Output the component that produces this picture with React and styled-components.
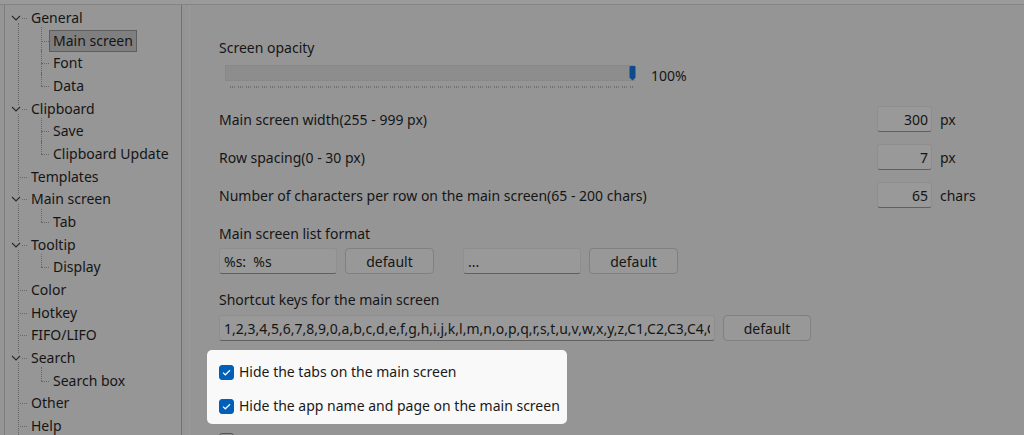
import React from 'react';
import styled, { createGlobalStyle } from 'styled-components';

// The screenshot is a dimmed settings window with one lit group, so the
// colours below are the dimmed ones and only the Spotlight keeps full light.

const GlobalStyle = createGlobalStyle`
  html, body {
    margin: 0;
    padding: 0;
    width: 1024px;
    height: 435px;
    overflow: hidden;
    background: #9a9a9a;
  }

  body {
    font-family: 'Noto Sans', 'Open Sans', 'DejaVu Sans', sans-serif;
    font-size: 14px;
    color: #151515;
  }
`;

const Window = styled.div`
  display: flex;
  height: 431px;
  margin-top: 4px;
  border-top: 1px solid #848484;
  background: #959595;
`;

const TreePanel = styled.nav`
  flex: none;
  width: 176px;
  margin-left: 4px;
  border-left: 1px solid #7d7d7d;
  border-right: 1px solid #727272;
  background-color: #969696;
`;

const TreeList = styled.ul`
  position: relative;
  list-style: none;
  margin: 0;
  padding: 1.7px 0 0;

  &::before {
    content: '';
    position: absolute;
    left: 13px;
    top: 18px;
    bottom: 0;
    border-left: 1px dotted #666666;
  }
`;

const TreeRow = styled.li`
  position: relative;
  display: flex;
  align-items: center;
  height: 22.67px;
  padding-left: ${(p) => (p.$level === 0 ? 22 : 44)}px;
  white-space: nowrap;

  &::after {
    content: '';
    position: absolute;
    top: 50%;
    left: ${(p) => (p.$level === 0 ? 15 : 36)}px;
    width: ${(p) => (p.$level === 0 ? 7 : 8)}px;
    border-top: 1px dotted #666666;
  }

  &::before {
    content: '';
    display: ${(p) => (p.$level === 0 ? 'none' : 'block')};
    position: absolute;
    left: 36px;
    top: -2px;
    height: ${(p) => (p.$last ? 'calc(50% + 2px)' : 'calc(100% + 2px)')};
    border-left: 1px dotted #666666;
  }
`;

const Chevron = styled.svg`
  position: absolute;
  left: 5px;
  top: 50%;
  margin-top: -4px;
  width: 12px;
  height: 8px;
  background: #969696;
  z-index: 1;
`;

const TreeLabel = styled.span`
  position: relative;
  z-index: 1;
  line-height: 20px;
  padding: 0 3px;
  border: 1px solid ${(p) => (p.$selected ? '#5e5e5e' : 'transparent')};
  background: ${(p) => (p.$selected ? '#7f7f7f' : 'transparent')};
`;

const SettingsPanel = styled.div`
  flex: 1;
  margin-left: 7px;
  border-left: 1px solid #9b9b9b;
  padding: 33px 0 0 29px;
`;

const SectionLabel = styled.div`
  line-height: 20px;
  margin-top: ${(p) => p.$top || 0}px;
`;

const SliderRow = styled.div`
  display: flex;
  align-items: flex-start;
  margin-top: 7px;
`;

const SliderBox = styled.div`
  width: 410px;
  margin-left: 6px;
`;

const Track = styled.div`
  position: relative;
  height: 14px;
  border: 1px solid #888888;
  background: #8d8d8d;
`;

const Thumb = styled.svg`
  position: absolute;
  right: -2px;
  top: 0;
  width: 7px;
  height: 15px;
`;

const Ticks = styled.div`
  height: 2px;
  margin: 5px 1px 0 5px;
  background: repeating-linear-gradient(
    90deg,
    #707070 0 1px,
    transparent 1px 2px,
    #707070 2px 3px,
    transparent 3px 4px,
    #777777 4px 5px,
    transparent 5px 8px
  );
`;

const SliderValue = styled.span`
  margin-left: 16px;
  line-height: 20px;
  margin-top: 1px;
`;

const NumberRow = styled.div`
  display: grid;
  grid-template-columns: 650px 55px auto;
  column-gap: 8px;
  align-items: center;
  height: 26px;
  margin-top: ${(p) => p.$top}px;
`;

const TextField = styled.input`
  box-sizing: border-box;
  width: ${(p) => p.$width}px;
  height: 26px;
  margin: 0;
  padding: 0 ${(p) => (p.$right ? 3 : 4)}px;
  border: 1px solid #8e8e8e;
  border-bottom: 1px solid #606060;
  border-radius: 3px;
  background: #999999;
  font-family: inherit;
  font-size: 14px;
  color: #151515;
  text-align: ${(p) => (p.$right ? 'right' : 'left')};
  outline: none;
`;

const FieldRow = styled.div`
  display: flex;
  align-items: center;
  gap: 8px;
  margin-top: ${(p) => p.$top}px;
`;

const Spacer = styled.div`
  width: ${(p) => p.$width}px;
`;

const Button = styled.button`
  box-sizing: border-box;
  width: ${(p) => p.$width}px;
  height: 26px;
  padding: 0;
  border: 1px solid #808080;
  border-radius: 4px;
  background: #989898;
  font-family: inherit;
  font-size: 14px;
  color: #151515;
`;

const Spotlight = styled.div`
  box-sizing: border-box;
  width: 360px;
  margin: 9px 0 0 -12px;
  padding: 12px 0 8px 12px;
  border-radius: 5px;
  background: #f9f9f9;
  color: #1a1a1a;
  display: flex;
  flex-direction: column;
  gap: 14px;
`;

const CheckRow = styled.label`
  display: flex;
  align-items: center;
  gap: 5px;
  height: 20px;
  line-height: 20px;
  white-space: nowrap;
  margin-top: ${(p) => p.$top || 0}px;
`;

const CheckBox = styled.span`
  box-sizing: border-box;
  flex: none;
  display: flex;
  align-items: center;
  justify-content: center;
  width: 15px;
  height: 15px;
  border-radius: 3px;
  border: 1px solid ${(p) => (p.$checked ? '#005fb8' : '#555555')};
  background: ${(p) => (p.$checked ? '#005fb8' : '#939393')};
`;

const tree = [
  { label: 'General', level: 0, open: true },
  { label: 'Main screen', level: 1, selected: true },
  { label: 'Font', level: 1 },
  { label: 'Data', level: 1, last: true },
  { label: 'Clipboard', level: 0, open: true },
  { label: 'Save', level: 1 },
  { label: 'Clipboard Update', level: 1, last: true },
  { label: 'Templates', level: 0 },
  { label: 'Main screen', level: 0, open: true },
  { label: 'Tab', level: 1, last: true },
  { label: 'Tooltip', level: 0, open: true },
  { label: 'Display', level: 1, last: true },
  { label: 'Color', level: 0 },
  { label: 'Hotkey', level: 0 },
  { label: 'FIFO/LIFO', level: 0 },
  { label: 'Search', level: 0, open: true },
  { label: 'Search box', level: 1, last: true },
  { label: 'Other', level: 0 },
  { label: 'Help', level: 0 },
];

const numberRows = [
  { label: 'Main screen width(255 - 999 px)', value: '300', unit: 'px', top: 18 },
  { label: 'Row spacing(0 - 30 px)', value: '7', unit: 'px', top: 12 },
  { label: 'Number of characters per row on the main screen(65 - 200 chars)', value: '65', unit: 'chars', top: 12 },
];

const shortcutKeys =
  '1,2,3,4,5,6,7,8,9,0,a,b,c,d,e,f,g,h,i,j,k,l,m,n,o,p,q,r,s,t,u,v,w,x,y,z,C1,C2,C3,C4,C5,C6,C7,C8,C9';

const Check = ({ checked }) => (
  <CheckBox $checked={checked}>
    {checked && (
      <svg width="9" height="7" viewBox="0 0 9 7">
        <path d="M1 3.6 L3.3 5.8 L8 1.2" fill="none" stroke="#ffffff" strokeWidth="1.2" />
      </svg>
    )}
  </CheckBox>
);

const App = () => {
  return (
    <>
      <GlobalStyle />
      <Window>
        <TreePanel>
          <TreeList>
            {tree.map((item, i) => (
              <TreeRow key={i} $level={item.level} $last={item.last}>
                {item.open && (
                  <Chevron viewBox="0 0 12 8">
                    <path d="M2 2 L6 6 L10 2" fill="none" stroke="#2a2a2a" strokeWidth="1.1" />
                  </Chevron>
                )}
                <TreeLabel $selected={item.selected}>{item.label}</TreeLabel>
              </TreeRow>
            ))}
          </TreeList>
        </TreePanel>

        <SettingsPanel>
          <SectionLabel>Screen opacity</SectionLabel>
          <SliderRow>
            <SliderBox>
              <Track>
                <Thumb viewBox="0 0 7 15">
                  <path d="M0.5 1 Q0.5 0 1.5 0 L5.5 0 Q6.5 0 6.5 1 L6.5 11.5 L3.5 14.5 L0.5 11.5 Z" fill="#0f4a8e" />
                </Thumb>
              </Track>
              <Ticks />
            </SliderBox>
            <SliderValue>100%</SliderValue>
          </SliderRow>

          {numberRows.map((row) => (
            <NumberRow key={row.label} $top={row.top}>
              <span>{row.label}</span>
              <TextField $width={55} $right readOnly value={row.value} />
              <span>{row.unit}</span>
            </NumberRow>
          ))}

          <SectionLabel $top={16}>Main screen list format</SectionLabel>
          <FieldRow $top={4}>
            <TextField $width={118} readOnly value="%s:  %s" />
            <Button $width={89}>default</Button>
            <Spacer $width={13} />
            <TextField $width={118} readOnly value="..." />
            <Button $width={89}>default</Button>
          </FieldRow>

          <SectionLabel $top={16}>Shortcut keys for the main screen</SectionLabel>
          <FieldRow $top={5}>
            <TextField $width={496} readOnly value={shortcutKeys} />
            <Button $width={88}>default</Button>
          </FieldRow>

          <Spotlight>
            <CheckRow>
              <Check checked />
              Hide the tabs on the main screen
            </CheckRow>
            <CheckRow>
              <Check checked />
              Hide the app name and page on the main screen
            </CheckRow>
          </Spotlight>

          <CheckRow $top={6}>
            <Check />
          </CheckRow>
        </SettingsPanel>
      </Window>
    </>
  );
};

export default App;
